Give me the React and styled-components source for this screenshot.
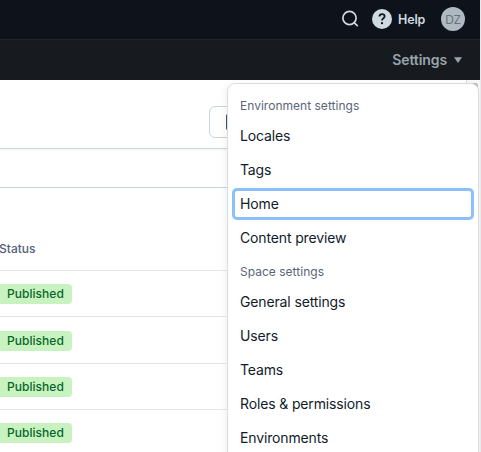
import React from 'react';
import styled, { createGlobalStyle } from 'styled-components';

const GlobalStyle = createGlobalStyle`
  * { box-sizing: border-box; }
  body { margin: 0; overflow: hidden; background: #fff; }
`;

const Page = styled.div`
  position: relative;
  width: 481px;
  height: 452px;
  overflow: hidden;
  border-right: 1px solid #e9eaec;
  background: #fff;
  font-family: Inter, sans-serif;
  color: #111b2b;
`;

const TopBar = styled.header`
  display: flex;
  align-items: center;
  justify-content: flex-end;
  height: 40px;
  padding: 0 15px 2px 0;
  border-bottom: 1px solid #20252b;
  background: #0d121b;
`;

const SearchIcon = styled.svg`
  width: 18px;
  height: 18px;
  margin-right: 13px;
`;

const HelpMark = styled.span`
  display: grid;
  place-items: center;
  width: 20px;
  height: 20px;
  margin-right: 6px;
  border-radius: 50%;
  background: #cfd9e0;
`;

const HelpLabel = styled.span`
  width: 27px;
  margin-right: 16px;
  padding-top: 2px;
  font-size: 12.5px;
  font-weight: 600;
  line-height: 20px;
  letter-spacing: -0.15px;
  color: #cfd9e0;
`;

const Avatar = styled.span`
  width: 24px;
  height: 24px;
  border-radius: 50%;
  background: #aeb9c1;
  color: #68727b;
  font-size: 12px;
  line-height: 25px;
  text-align: center;
  letter-spacing: -0.4px;
`;

const NavBar = styled.nav`
  display: flex;
  align-items: center;
  justify-content: flex-end;
  gap: 7px;
  height: 40px;
  padding-right: 18px;
  background: #171b1f;
  color: #9aa4ae;
  font-size: 14px;
  font-weight: 600;
  letter-spacing: -0.09px;
`;

const NavLabel = styled.span`
  height: 18px;
  line-height: 17px;
`;

const ActionRow = styled.section`
  height: 69px;
  padding: 26px 0 0 209px;
  border-bottom: 1px solid #c8d5de;
`;

const ActionButton = styled.div`
  display: flex;
  align-items: center;
  width: 100px;
  height: 32px;
  padding-left: 15px;
  border: 1px solid #c7d5df;
  border-radius: 6px;
`;

const FilterRow = styled.section`
  height: 39px;
  border-top: 2px solid #f8fafb;
  border-bottom: 1px solid #c8d3dc;
`;

const TableHead = styled.div`
  height: 83px;
  padding: 51px 0 0 0;
  border-bottom: 1px solid #e1e6e8;
  color: #536078;
  font-size: 12px;
  font-weight: 550;
  line-height: 20px;
  text-indent: -1px;
`;

const TableRow = styled.div`
  height: ${(p) => p.$height}px;
  padding-top: ${(p) => p.$inset}px;
  border-bottom: 1px solid #e3e6e8;
`;

const Badge = styled.span`
  display: block;
  width: 74px;
  height: 20px;
  margin-left: -2px;
  padding-left: 9px;
  border-radius: 4px;
  background: #c8f2c0;
  color: #08662a;
  font-size: 12px;
  font-weight: 550;
  line-height: 20px;
  letter-spacing: 0.04px;
`;

const Gutter = styled.div`
  position: absolute;
  top: 80px;
  right: 0;
  bottom: 0;
  width: 14px;
  border-left: 1px solid #dedede;
  background: #f8f8f8;
`;

const ScrollThumb = styled.div`
  width: 8px;
  height: 90px;
  margin: 3px 0 0 3px;
  border-radius: 3px;
  background: #b5b5b5;
`;

const Menu = styled.div`
  position: absolute;
  top: 83px;
  left: 227px;
  display: flex;
  flex-direction: column;
  width: 252px;
  height: 400px;
  padding: 5px 4px;
  border: 1px solid #dadddf;
  border-radius: 8px;
  background: #fff;
  box-shadow: -1px 2px 8px rgba(17, 27, 43, 0.07);
`;

const SectionTitle = styled.div`
  height: 30px;
  padding: 2px 0 0 8px;
  color: #5a657c;
  font-size: 12px;
  line-height: 30px;
  letter-spacing: 0.02px;
`;

const MenuItem = styled.div`
  display: flex;
  align-items: center;
  height: 32px;
  margin: 1px 0;
  padding-left: 8px;
  border-radius: 5px;
  box-shadow: ${(p) => (p.$focused ? 'inset 0 0 0 3px #8cc0fa' : 'none')};
  font-size: 14px;
  line-height: 20px;
  letter-spacing: -0.14px;
`;

const sections = [
  { title: 'Environment settings', items: ['Locales', 'Tags', 'Home', 'Content preview'] },
  { title: 'Space settings', items: ['General settings', 'Users', 'Teams', 'Roles & permissions', 'Environments'] },
];

const rows = [
  { height: 46, inset: 13 },
  { height: 47, inset: 14 },
  { height: 46, inset: 13 },
  { height: 47, inset: 13 },
];

export default function App() {
  return (
    <>
      <GlobalStyle />
      <Page>
        <TopBar>
          <SearchIcon viewBox="0 0 18 18" fill="none" stroke="#cfd9e0" strokeWidth="1.7" strokeLinecap="round">
            <circle cx="8.5" cy="8" r="6.6" />
            <path d="M13.3 12.800 16.3 15.700" />
          </SearchIcon>
          <HelpMark>
            <svg width="12" height="14" viewBox="0 0 12 14" fill="none">
              <path d="M3.5 4.6C3.5 3 4.6 2.2 6 2.2s2.6.8 2.6 2.2C8.600 6.300 6 6.100 6 8.500" stroke="#111820" strokeWidth="1.8" />
              <circle cx="6" cy="11.2" r="1.15" fill="#111820" />
            </svg>
          </HelpMark>
          <HelpLabel>Help</HelpLabel>
          <Avatar>DZ</Avatar>
        </TopBar>
        <NavBar>
          <NavLabel>Settings</NavLabel>
          <svg width="8" height="6" viewBox="0 0 8 6">
            <path d="M.5.5h7L4 5.600Z" fill="#9aa4ae" stroke="#9aa4ae" strokeLinejoin="round" strokeWidth=".6" />
          </svg>
        </NavBar>
        <ActionRow>
          <ActionButton>
            <svg width="16" height="18" viewBox="0 0 16 18" fill="none" stroke="#354052" strokeWidth="1.8">
              <rect x="2" y="1.800" width="12.400" height="14.400" rx="1" />
            </svg>
          </ActionButton>
        </ActionRow>
        <FilterRow />
        <TableHead>Status</TableHead>
        {rows.map(({ height, inset }, i) => (
          <TableRow key={i} $height={height} $inset={inset}>
            <Badge>Published</Badge>
          </TableRow>
        ))}
        <Gutter><ScrollThumb /></Gutter>
        <Menu>
          {sections.map((section) => (
            <React.Fragment key={section.title}>
              <SectionTitle>{section.title}</SectionTitle>
              {section.items.map((item) => (
                <MenuItem key={item} $focused={item === 'Home'}>{item}</MenuItem>
              ))}
            </React.Fragment>
          ))}
        </Menu>
      </Page>
    </>
  );
}
